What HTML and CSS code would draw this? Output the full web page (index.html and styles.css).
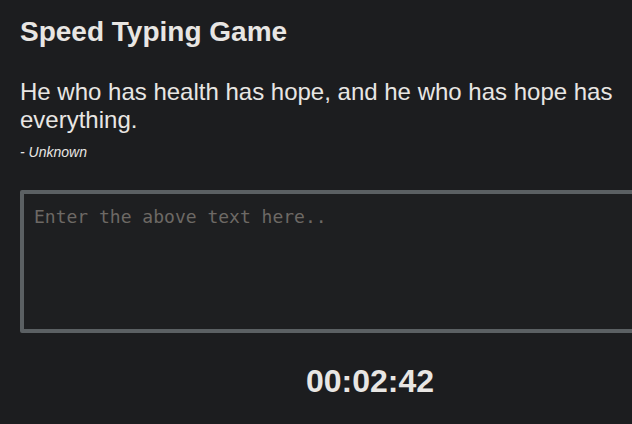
FILE: index.html
```html
<!DOCTYPE html>
<html lang="en">
<head>
<meta charset="utf-8">
<title>Speed Typing Game</title>
<link rel="stylesheet" href="styles.css">
</head>
<body>
<main class="container">
  <h1 class="title">Speed Typing Game</h1>
  <p class="quote">He who has health has hope, and he who has hope has everything.</p>
  <p class="author">- Unknown</p>
  <textarea class="input" placeholder="Enter the above text here.."></textarea>
  <div class="timer">00:02:42</div>
</main>
</body>
</html>
```
FILE: styles.css
```css
html, body {
  margin: 0;
  padding: 0;
  background: #1c1d1f;
  overflow: hidden;
}
body {
  font-family: "Liberation Sans", Arial, sans-serif;
  color: #e8e6e3;
}
.container {
  width: 700px;
  padding: 16px 20px 0;
  display: flex;
  flex-direction: column;
}
.title {
  margin: 0;
  font-size: 28px;
  font-weight: bold;
  line-height: 32px;
}
.quote {
  margin: 30px 0 0;
  font-size: 24px;
  line-height: 27.5px;
}
.author {
  margin: 11px 0 0;
  font-size: 14px;
  font-style: italic;
  line-height: 16px;
}
.input {
  margin: 30px 0 0;
  box-sizing: border-box;
  width: 700px;
  height: 143px;
  border: 4px solid #5b6063;
  border-radius: 2px;
  background: #1e1f21;
  color: #e8e6e3;
  padding: 12px 10px;
  font-family: "DejaVu Sans Mono", "Liberation Mono", monospace;
  font-size: 18px;
  resize: none;
  outline: none;
}
.input::placeholder {
  color: #6d6965;
}
.timer {
  margin-top: 30px;
  text-align: center;
  font-size: 32px;
  font-weight: bold;
  line-height: 37px;
}
```
